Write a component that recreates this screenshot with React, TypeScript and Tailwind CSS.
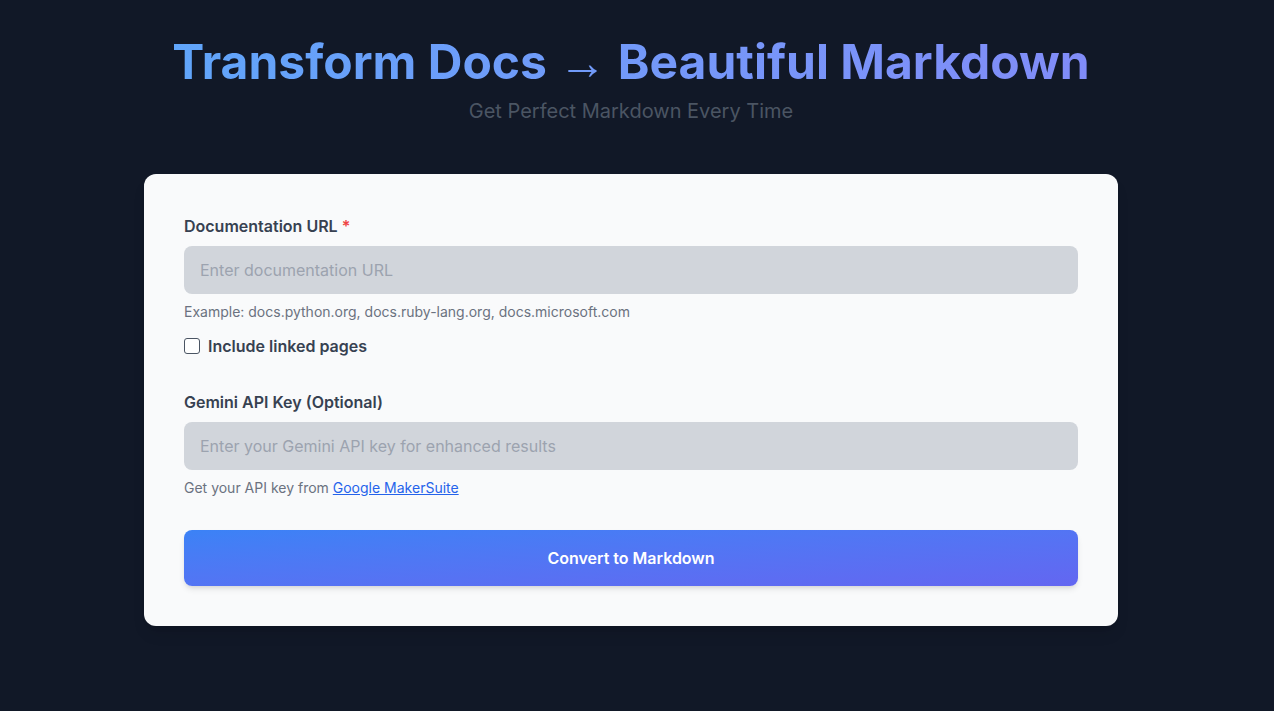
import React from "react";

export default function App() {
  return (
    <div
      className="min-h-[711px] w-full bg-[#111827] pr-3 pt-[38px]"
      style={{ fontFamily: "Inter, 'Noto Sans', sans-serif" }}
    >
      {/* Header */}
      <div className="flex flex-col items-center">
        <h1 className="h-12 bg-gradient-to-r from-[#60a5fa] to-[#818cf8] bg-clip-text text-[48px] font-bold leading-[48px] text-transparent">
          Transform Docs{" "}
          <span className="font-normal leading-none" style={{ fontFamily: "'Liberation Sans', sans-serif" }}>
            →
          </span>{" "}
          Beautiful Markdown
        </h1>
        <p className="mt-[11px] text-xl leading-7 text-[#4b5563]">
          Get Perfect Markdown Every Time
        </p>
      </div>

      {/* Form card */}
      <div className="mx-auto mt-[49px] w-[974px] rounded-xl bg-[#f9fafb] p-10 shadow-lg">
        <label className="block text-base font-semibold leading-6 text-[#374151]">
          Documentation URL <span className="text-[#ef4444]">*</span>
        </label>
        <input
          type="text"
          placeholder="Enter documentation URL"
          className="mt-2 block h-12 w-full rounded-lg bg-[#d1d5db] px-4 text-base text-[#374151] outline-none placeholder:text-[#9ca3af]"
        />
        <p className="mt-2 text-sm leading-5 text-[#6b7280]">
          Example: docs.python.org, docs.ruby-lang.org, docs.microsoft.com
        </p>
        <label className="mt-3 flex items-center gap-2 text-base font-semibold leading-6 text-[#374151]">
          <span className="h-4 w-4 rounded-[3px] border-[1.5px] border-[#4b5563] bg-white" />
          Include linked pages
        </label>

        <label className="mt-8 block text-base font-semibold leading-6 text-[#374151]">
          Gemini API Key (Optional)
        </label>
        <input
          type="text"
          placeholder="Enter your Gemini API key for enhanced results"
          className="mt-2 block h-12 w-full rounded-lg bg-[#d1d5db] px-4 text-base text-[#374151] outline-none placeholder:text-[#9ca3af]"
        />
        <p className="mt-2 text-sm leading-5 text-[#6b7280]">
          Get your API key from{" "}
          <a className="text-[#2563eb] underline">Google MakerSuite</a>
        </p>

        <button className="mt-8 flex h-14 w-full items-center justify-center rounded-lg bg-gradient-to-br from-[#3b82f6] to-[#6366f1] text-base font-semibold text-white shadow-md">
          Convert to Markdown
        </button>
      </div>
    </div>
  );
}
